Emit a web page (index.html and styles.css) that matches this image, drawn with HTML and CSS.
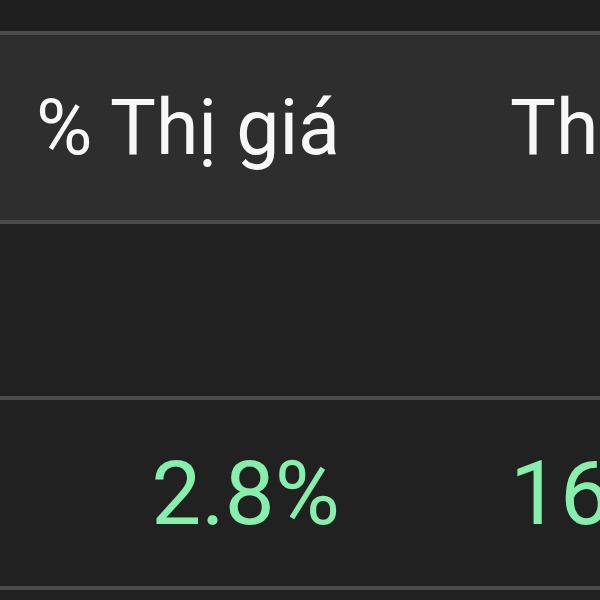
FILE: index.html
```html
<!DOCTYPE html>
<html lang="vi">
<head>
<meta charset="utf-8">
<link rel="stylesheet" href="styles.css">
</head>
<body>
<div class="table">
  <div class="top"></div>
  <div class="row head">
    <div class="cell c1">% Thị giá</div>
    <div class="cell c2">Thị giá</div>
  </div>
  <div class="row empty">
    <div class="cell c1"></div>
    <div class="cell c2"></div>
  </div>
  <div class="row data">
    <div class="cell c1 up">2.8%</div>
    <div class="cell c2 up">16,000</div>
  </div>
</div>
</body>
</html>
```
FILE: styles.css
```css
html, body {
  margin: 0;
  padding: 0;
  width: 600px;
  height: 600px;
  overflow: hidden;
  background: #212121;
  font-family: Roboto, "Noto Sans", sans-serif;
}
.table {
  display: flex;
  flex-direction: column;
  width: 600px;
}
.top {
  height: 31px;
  background: #1f1f1f;
  border-bottom: 4px solid #4b4b4b;
}
.row {
  display: flex;
  align-items: center;
  border-bottom: 4px solid #4b4b4b;
  white-space: nowrap;
}
.head {
  height: 185px;
  background: #2e2e2e;
  color: #f7f7f7;
  font-size: 77px;
}
.empty {
  height: 172px;
  background: #212121;
}
.data {
  height: 186px;
  background: #212121;
  font-size: 89px;
}
.cell {
  flex: none;
}
.c1 {
  width: 340px;
  text-align: right;
}
.c2 {
  margin-left: 170px;
  text-align: left;
}
.up {
  color: #86efac;
}
```
